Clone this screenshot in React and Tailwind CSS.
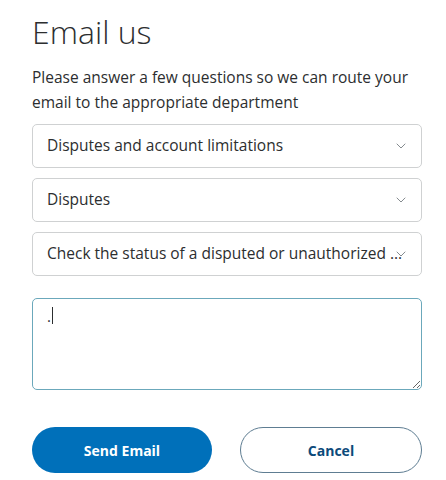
import { ChevronDown } from 'lucide-react';

const selects = [
  'Disputes and account limitations',
  'Disputes',
  'Check the status of a disputed or unauthorized …',
];

function Select({ label }) {
  return (
    <div className="flex items-center h-[44px] pl-[14px] pr-[12px] border border-[#cfd1d2] rounded-[5px] bg-white">
      <span className="flex-1 min-w-0 whitespace-nowrap text-[15.5px] text-[#2c2e2f]">{label}</span>
      <ChevronDown className="w-4 h-4 -ml-2 shrink-0 text-[#6c7378]" strokeWidth={1.25} />
    </div>
  );
}

export default function App() {
  return (
    <div className="min-h-screen bg-white pl-8 pr-6 pt-[12px] font-['Open_Sans',sans-serif]">
      <h1 className="text-[32px] leading-[40px] font-light text-[#2c2e2f]">Email us</h1>

      <p className="mt-[13px] text-[15.5px] leading-[25px] text-[#2c2e2f]">
        Please answer a few questions so we can route your email to the appropriate department
      </p>

      <div className="mt-[9px] flex flex-col gap-[10px]">
        {selects.map((s) => (
          <Select key={s} label={s} />
        ))}
      </div>

      <div className="relative mt-[22px]">
        <textarea
          defaultValue="."
          className="block w-full h-[92px] px-[14px] py-[6px] border border-[#6ba8bb] rounded-[5px] text-[15px] text-[#2c2e2f] outline-none resize-y"
        />
        <span className="absolute left-[20px] top-[9px] w-px h-[17px] bg-[#2c2e2f]" />
      </div>

      <div className="mt-[37px] flex gap-[28px]">
        <button className="flex-1 h-[46px] rounded-full bg-[#0070ba] text-white text-[14px] font-bold">
          Send Email
        </button>
        <button className="flex-1 h-[46px] rounded-full border border-[#5e7d92] bg-white text-[#0c4a7a] text-[14px] font-bold">
          Cancel
        </button>
      </div>
    </div>
  );
}
